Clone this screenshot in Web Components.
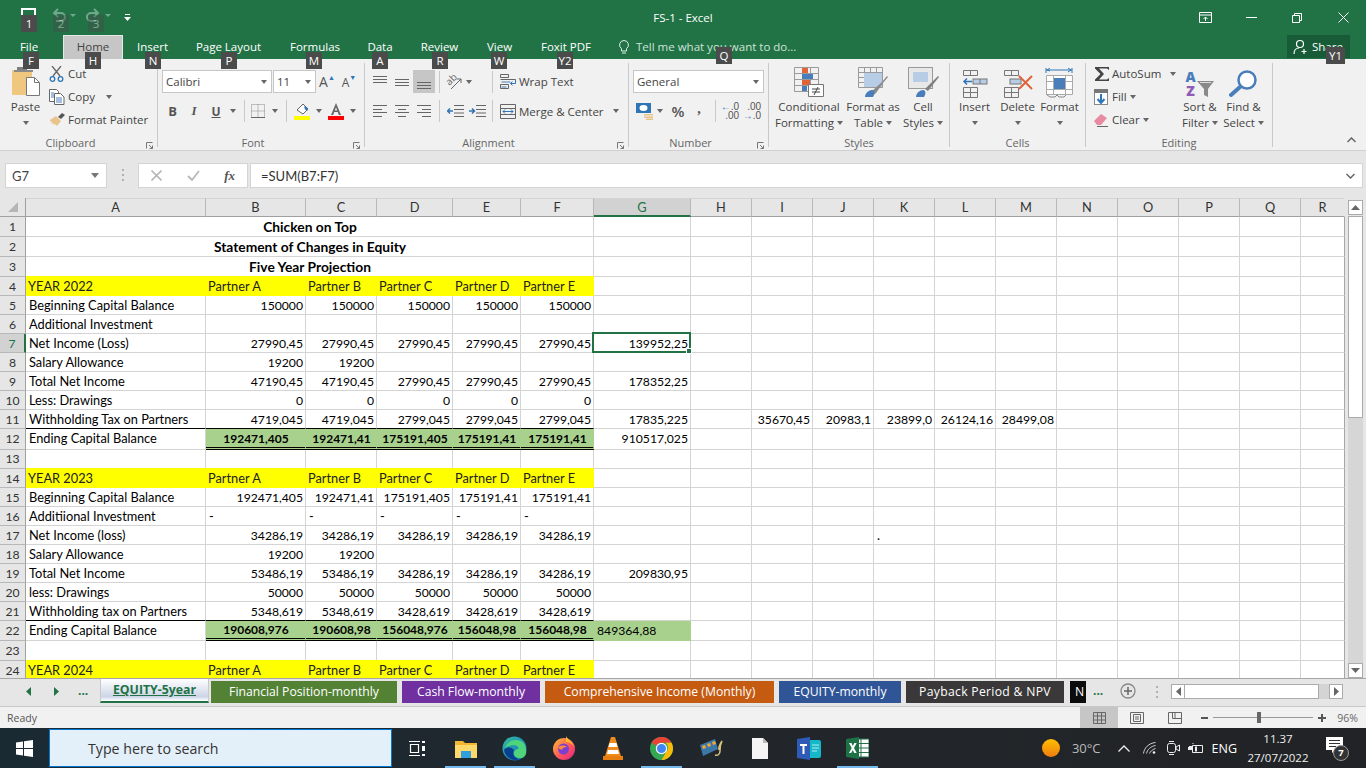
<!DOCTYPE html>
<html>
<head>
<meta charset="utf-8">
<title>FS-1 - Excel</title>
<style>
  html, body { margin: 0; padding: 0; width: 1366px; height: 768px; overflow: hidden; background: #f1f1f1; }
  body { font-family: "Open Sans", "Noto Sans", sans-serif; position: relative; }
</style>
</head>
<body>
<xl-titlebar></xl-titlebar>
<xl-ribbon></xl-ribbon>
<xl-formula></xl-formula>
<xl-sheet></xl-sheet>
<xl-tabs></xl-tabs>
<xl-status></xl-status>
<xl-taskbar></xl-taskbar>
<xl-keytips></xl-keytips>

<script>
const svg = (w, h, body) => `<svg xmlns="http://www.w3.org/2000/svg" width="${w}" height="${h}" viewBox="0 0 ${w} ${h}" style="display:block;flex:none">${body}</svg>`;
const caret = '<i class="c"></i>';

class Base extends HTMLElement {
    constructor() {
        super();
        this.attachShadow({ mode: 'open' });
    }

    connectedCallback() {
        this.shadowRoot.innerHTML = this.markup();
    }
}

class XlTitlebar extends Base {
    markup() {
        const tabs = [['File', 4, 50], ['Home', 9, 60, 1], ['Insert', 4.5, 50], ['Page Layout', 11, 80], ['Formulas', 16.5, 60], ['Data', 15, 40], ['Review', 14.5, 50], ['View', 15, 40], ['Foxit PDF', 11.5, 70]];
        return `<style>
          :host { display:block; height:59px; background:#217346; color:#fff; font:12px "Open Sans",sans-serif; }
          .top { height:35px; display:flex; align-items:center; position:relative; }
          .qat { display:flex; align-items:flex-start; padding:8px 0 0 21px; height:35px; box-sizing:border-box; }
          .qg { display:flex; gap:4px; align-items:center; height:14px; }
          .title { position:absolute; left:0; right:0; top:10px; text-align:center; font-size:11.500px; line-height:16px; }
          .win { margin-left:auto; display:flex; align-items:center; }
          .win span { width:46px; display:flex; justify-content:center; }
          .tabs { height:24px; display:flex; align-items:stretch; }
          .tab { text-align:center; line-height:23px; box-sizing:border-box; font-size:11.500px; }
          .tab.on { background:#c6c6c6; color:#444; border:1px solid #e8e8e8; border-bottom:none; line-height:22px; }
          .tell { margin-left:18px; display:flex; align-items:center; gap:7px; color:#cfe3d8; font-size:11.500px; padding-bottom:1px; }
          .share { margin-left:auto; margin-right:16px; width:63px; height:23px; background:#185c37; display:flex; align-items:center; gap:3px; padding-left:6px; box-sizing:border-box; font-size:11.500px; overflow:hidden; }
        </style>
        <div class="top">
          <div class="qat">
            ${svg(15, 12, '<path d="M1 12V1h13v11" fill="none" stroke="#fff" stroke-width="2"/>')}
            <span class="qg" style="margin-left:15px">
              ${svg(15, 14, '<path d="M3 5h7a4 4 0 0 1 0 8H5" fill="none" stroke="#6fa88a" stroke-width="2"/><path d="M7 1 3 5l4 4" fill="none" stroke="#6fa88a" stroke-width="2"/>')}
              ${svg(6, 3, '<path d="M0 0h6L3 3z" fill="#6fa88a"/>')}
            </span>
            <span class="qg" style="margin-left:10px">
              ${svg(15, 14, '<path d="M12 5H5a4 4 0 0 0 0 8h5" fill="none" stroke="#6fa88a" stroke-width="2"/><path d="m8 1 4 4-4 4" fill="none" stroke="#6fa88a" stroke-width="2"/>')}
              ${svg(6, 3, '<path d="M0 0h6L3 3z" fill="#6fa88a"/>')}
            </span>
            <span style="margin-left:13px;margin-top:6px">${svg(7, 7, '<path d="M1 0h5v1H1zM0 3h7L3.500 7z" fill="#fff"/>')}</span>
          </div>
          <div class="title">FS-1 - Excel</div>
          <div class="win">
            <span>${svg(13, 11, '<path d="M.5.500h12v10H.5zM.5 3h12M6.500 9V5M4.500 7l2-2 2 2" fill="none" stroke="#fff"/>')}</span>
            <span>${svg(11, 1, '<path d="M0 .5h11" stroke="#fff"/>')}</span>
            <span>${svg(10, 10, '<path d="M.5 2.500h7v7h-7zM2.500 2.500v-2h7v7h-2" fill="none" stroke="#fff"/>')}</span>
            <span>${svg(11, 11, '<path d="m.5.500 10 10M10.500.500l-10 10" stroke="#fff"/>')}</span>
          </div>
        </div>
        <div class="tabs">
          ${tabs.map(([t, ml, w, on]) => `<div class="tab${on ? ' on' : ''}" style="margin-left:${ml}px;width:${w}px">${t}</div>`).join('')}
          <div class="tell">${svg(10, 14, '<path d="M5 .5a4.500 4.500 0 0 0-2.500 8.200V11h5V8.700A4.500 4.500 0 0 0 5 .5zM3 13h4" fill="none" stroke="#dfeee6"/>')}<span>Tell me what you want to do...</span></div>
          <div class="share">${svg(16, 16, '<circle cx="7" cy="5" r="3.500" fill="none" stroke="#fff" stroke-width="1.200"/><path d="M1 15c0-4 2.500-6 5-6M11 10v5M8.500 12.500h5" fill="none" stroke="#fff" stroke-width="1.200"/>')}<span>Share</span></div>
        </div>`;
    }
}

class XlGroup extends Base {
    markup() {
        const has = this.hasAttribute('launcher');
        const launcher = has ? `<i class="l">${svg(7, 7, '<path d="M.5 6.500v-6h6M3 3l3.500 3.500M6.500 3.500v3h-3" fill="none" stroke="#777"/>')}</i>` : '';
        return `<style>
          :host { display:flex; flex-direction:column; flex:none; position:relative; box-sizing:border-box; height:84px; border-right:1px solid #c8c8c8; margin-top:4px; }
          .body { height:72px; display:block; }
          .label { position:absolute; left:0; right:${has ? 16 : 0}px; top:72px; height:16px; line-height:16px; text-align:center; color:#666; font-size:11px; }
          .l { position:absolute; right:4px; top:79px; display:block; }
        </style>
        <div class="body"><slot></slot></div>
        <div class="label">${this.getAttribute('label')}</div>${launcher}`;
    }
}

const ic = {
    paste: svg(30, 30, '<rect x="1" y="3" width="20" height="25" rx="1" fill="#f0c77f"/><rect x="6" y="0" width="10" height="4" fill="#7f7f7f"/><rect x="3" y="3" width="19" height="2" fill="#8a8a8a"/><path d="M15.500 10.500h8l5 5v13h-13z" fill="#fff" stroke="#777"/><path d="M23.500 10.500v5h5" fill="none" stroke="#777"/>'),
    cut: svg(15, 16, '<path d="m3 0 8 10M12 0 4 10" stroke="#666" stroke-width="1.300" fill="none"/><circle cx="3.500" cy="13" r="2.300" fill="none" stroke="#2f75b5" stroke-width="1.300"/><circle cx="11.500" cy="13" r="2.300" fill="none" stroke="#2f75b5" stroke-width="1.300"/>'),
    copy: svg(16, 16, '<path d="M.5.500h7l2 2v10h-9z" fill="#fff" stroke="#666"/><path d="M5.500 4.500h6l3.500 3.500v7.500H5.500z" fill="#fff" stroke="#666"/><path d="M7 9h6M7 11h6M7 13h6M2 4h3M2 6h3M2 8h3" stroke="#4a7ebb"/>'),
    painter: svg(17, 15, '<path d="m9 5 4-4 3 2-4 4z" fill="#555"/><path d="M1 8 7 4l5 5-4 5-2-2-1 1-1-2-2 1 1-2-2-1z" fill="#e9c48a"/>'),
    bold: '<b style="font:bold 13px \'Open Sans\';color:#555">B</b>',
    ital: '<i style="font:italic 13px \'Liberation Serif\';font-weight:bold;color:#555">I</i>',
    under: '<span style="font:bold 12px \'Open Sans\';color:#555;text-decoration:underline">U</span>',
    border: svg(14, 14, '<path d="M.5.500h13v13H.5zM7 .5v13M.5 7h13" fill="none" stroke="#888" stroke-dasharray="1 1"/><path d="M0 13.500h14" stroke="#666"/>'),
    fill: svg(17, 17, '<path d="m3 7 6-6 5 5-5 5z" fill="#fff" stroke="#666"/><path d="M10 3.500c3 0 4 2 4 4l-3-1z" fill="#2f75b5"/><rect x="0" y="13" width="16" height="4" fill="#ffff00"/>'),
    color: svg(16, 17, '<path d="M3 12 8 0l5 12h-2.200l-1-3H6.200l-1 3zM6.800 7.500h2.400L8 4.200z" fill="#666"/><rect x="0" y="13" width="16" height="4" fill="#ff0000"/>'),
    lines: (...ls) => svg(15, 14, ls.map(l => `<path d="M${l[0]} ${l[2]}.5h${l[1] - l[0]}" stroke="#666"/>`).join('')),
    orient: '<span style="display:flex;align-items:center;position:relative;width:17px;height:17px"><span style="position:absolute;left:0;top:-1px;font:10px/14px \'Open Sans\';color:#666;transform:rotate(-45deg)">ab</span><span style="position:absolute;left:3px;top:3px">' + svg(14, 14, '<path d="m3 13 10-10M13 3H9M13 3v4" stroke="#666" fill="none"/>') + '</span></span>',
    outdent: svg(17, 12, '<path d="M7 .5h10M7 4.500h10M7 8h10M7 11.500h10" stroke="#666"/><path d="M6 6H1m2-2.500L.5 6 3 8.500" stroke="#2f75b5" stroke-width="1.500" fill="none"/>'),
    indent: svg(17, 12, '<path d="M7 .5h10M7 4.500h10M7 8h10M7 11.500h10" stroke="#666"/><path d="M0 6h5M3 3.500 5.500 6 3 8.500" stroke="#2f75b5" stroke-width="1.500" fill="none"/>'),
    wrap: svg(17, 15, '<path d="M.5.500h8v3h-8zM.5 5.500h15M.5 10.500h8v4h-8z" fill="none" stroke="#666"/><path d="M1.500 8h9M1.500 13h5" stroke="#4a7ebb"/><path d="M15.500 5.500v4h-5m2-2-2 2 2 2" fill="none" stroke="#2f75b5"/>'),
    merge: svg(16, 15, '<path d="M.5.500h15v14H.5zM.5 4.500h15M.5 10.500h15" fill="none" stroke="#666"/><path d="M3 7.500h10M5 5.500l-2 2 2 2M11 5.500l2 2-2 2" fill="none" stroke="#2f75b5"/>'),
    money: svg(17, 17, '<rect x="0" y="0" width="15" height="10" fill="#2f75b5"/><ellipse cx="7.500" cy="5" rx="4" ry="3" fill="#fff"/><path d="M8 11h9v1.500H8zM8 13.500h9V15H8zM10 15.500h7V17h-7z" fill="#e9c48a"/>'),
    pct: '<span style="font:600 15px \'Open Sans\';color:#555">%</span>',
    comma: '<span style="font:bold 14px \'Liberation Serif\';color:#555;position:relative;top:-2px">,</span>',
    dec1: '<span class="dc"><b><u>←</u>.0</b><b>.00</b></span>',
    dec2: '<span class="dc"><b>.00</b><b><u>→</u>.0</b></span>',
    cond: svg(31, 31, '<path d="M.5.500h24v24H.5zM8.500.500v24M16.500.500v24M.5 6.500h24M.5 12.500h24M.5 18.500h24" fill="none" stroke="#9a9a9a"/><path d="M8 1h6v5H8zM8 13h8v5H8z" fill="#e0633a"/><path d="M8 7h11v5H8zM8 19h5v5H8z" fill="#4a7ebb"/><path d="M14.500 17.500h15v12h-15z" fill="#fff" stroke="#777"/><path d="M18 22h8M18 25h8M24 20l-4 8" stroke="#444" fill="none"/>'),
    table: svg(31, 31, '<path d="M.5.500h24v20H.5zM6.500.500v20M12.500.500v20M18.500.500v20M.5 5.500h24M.5 10.500h24M.5 15.500h24" fill="none" stroke="#9a9a9a"/><rect x="6" y="6" width="18" height="14" fill="#b7cde6"/><path d="m14 24 10-9 5-6 1 1-5 6-7 10-5 4H7z" fill="#8a8a8a"/><path d="M7 30c0-4 4-7 7-7s3 4 1 7z" fill="#4a7ebb"/>'),
    cell: svg(31, 31, '<rect x=".5" y=".5" width="24" height="21" fill="#e8e8e8" stroke="#9a9a9a"/><rect x="5" y="5" width="15" height="10" fill="#b7cde6"/><path d="m17 22 8-8 5-5 1 1-4 5-7 9z" fill="#7f7f7f"/><path d="M8 30c0-4 4-7 7-7s3 4 1 7z" fill="#4a7ebb"/>'),
    insert: svg(26, 28, '<path d="M1.500.500h14v5h-14zM8.500.500v5M1.500 17.500h14v10h-14zM8.500 17.500v10M1.500 22.500h14" fill="none" stroke="#777"/><rect x="11" y="9" width="14" height="5" fill="#b7cde6" stroke="#777"/><path d="M18 9v5" stroke="#777"/><path d="M10 11.500H2m3-3-3 3 3 3" fill="none" stroke="#2f75b5" stroke-width="1.500"/>'),
    del: svg(30, 28, '<path d="M1.500.500h14v5h-14zM8.500.500v5M1.500 17.500h14v10h-14zM8.500 17.500v10M1.500 22.500h14" fill="none" stroke="#777"/><rect x="7" y="9" width="11" height="5" fill="#b7cde6" stroke="#777"/><path d="m16 6 13 13M29 6 16 19" stroke="#e0633a" stroke-width="2"/>'),
    format: svg(29, 30, '<path d="M1 2h26M1 0v5M27 0v5" stroke="#2f75b5" fill="none"/><path d="M5 3 2 2l3-2M23 0l3 2-3 2" fill="none" stroke="#2f75b5"/><path d="M1.500 7.500h26v19h-26zM8.500 7.500v19M20.500 7.500v19M1.500 13.500h26M1.500 21.500h26" fill="#fff" stroke="#aaa"/><rect x="9" y="10" width="11" height="11" fill="#4a7ebb"/><path d="M1.500 26.500 5 29h5l2-2 2 2h5l2-2" fill="none" stroke="#888"/>'),
    sigma: svg(16, 16, '<path d="M1 1h14v3l-2-1.500H5L10 8l-5 5.500h8l2-1.500v3H1v-1.500L6.500 8 1 2.500z" fill="#444"/>'),
    fillBtn: svg(14, 16, '<rect x=".5" y=".5" width="13" height="15" fill="#fff" stroke="#888"/><rect x="0" y="0" width="14" height="4" fill="#777"/><path d="M7 5v9M3.500 10 7 14l3.500-4" fill="none" stroke="#2f75b5" stroke-width="2"/>'),
    clear: svg(15, 15, '<path d="m0 9 7-7 6 4-6 7H3z" fill="#e88ba0"/><path d="M3 14.500h11" stroke="#666"/>'),
    sort: '<span class="az"><b style="color:#4a7ebb">A</b><b style="color:#8e5cb5">Z</b></span>' + svg(18, 18, '<path d="M0 1h17l-6 8v8l-4-2V9z" fill="#8a8a8a"/><path d="M3 2.500h11" stroke="#ddd"/>'),
    find: svg(29, 29, '<circle cx="18" cy="11" r="8.500" fill="#fff" stroke="#4a7ebb" stroke-width="2.500"/><path d="m11 18-9 8" stroke="#4a7ebb" stroke-width="4" stroke-linecap="round"/>')
};

class XlRibbon extends Base {
    markup() {
        const t = (w, html) => `<span class="t" style="width:${w}px">${html}</span>`;
        const gap = w => `<span style="width:${w}px;flex:none"></span>`;
        const big = (w, icon, a, b) => `<div class="big" style="width:${w}px"><div class="bi">${icon}</div><div>${a}</div><div>${b}</div></div>`;
        const sep = '<span class="sep"></span>';
        const menu = (icon, text, extra = '') => `<div class="m"><span class="mi">${icon}</span><span class="mt">${text}</span>${extra}</div>`;
        return `<style>
          :host { display:flex; height:92px; background:#f1f1f1; box-sizing:border-box; border-bottom:1px solid #d0d0d0; color:#444; font:11.500px/16px "Open Sans",sans-serif; position:relative; }
          .c { display:inline-block; width:0; height:0; border-left:3.500px solid transparent; border-right:3.500px solid transparent; border-top:4px solid #666; flex:none; }
          .t { display:inline-flex; align-items:center; justify-content:center; height:23px; flex:none; }
          .row { display:flex; align-items:center; height:24px; }
          .sep { width:1px; height:22px; background:#c8c8c8; flex:none; }
          .box { display:flex; align-items:center; justify-content:space-between; box-sizing:border-box; height:23px; background:#fff; border:1px solid #c6c6c6; padding:0 4px 0 3px; color:#444; flex:none; }
          .big { display:flex; flex-direction:column; align-items:center; text-align:center; flex:none; white-space:nowrap; }
          .big > div { height:16px; display:flex; align-items:center; justify-content:center; gap:3px; }
          .big .bi { height:33px; align-items:flex-end; padding-bottom:1px; box-sizing:border-box; gap:0; }
          .m { display:flex; align-items:center; height:23px; white-space:nowrap; }
          .mi { display:flex; width:var(--mi,19px); flex:none; }
          .mt { display:inline-flex; align-items:center; gap:3px; }
          .dc { display:flex; flex-direction:column; align-items:flex-end; font:10px/9px "Liberation Sans",sans-serif; color:#555; white-space:nowrap; }
          .dc b { font-weight:normal; }
          .dc u { text-decoration:none; color:#2f75b5; }
          .az { display:flex; flex-direction:column; font:bold 14px/14px "Open Sans",sans-serif; margin-right:1px; }
          .pad { display:flex; }
          .stack { padding-top:7px; box-sizing:border-box; }
          .stack .row:first-child { margin-bottom:6px; height:23px; }
          .chev { position:absolute; right:10px; top:78px; }
          .col { padding-top:3px; }
        </style>
        <xl-group label="Clipboard" launcher style="width:158px">
          <div class="pad">
            <div class="big" style="width:49px;margin-left:1px"><div class="bi" style="height:36px;padding-bottom:2px">${ic.paste}</div><div>Paste</div><div>${caret}</div></div>
            <div style="margin:-1px 0 0 -1px">
              ${menu(ic.cut, 'Cut')}
              ${menu(ic.copy, 'Copy', '<span style="width:11px"></span>' + caret)}
              ${menu(ic.painter, 'Format Painter')}
            </div>
          </div>
        </xl-group>
        <xl-group label="Font" launcher style="width:207px">
          <div class="stack" style="padding-left:4px">
            <div class="row">
              <span class="box" style="width:110px"><span>Calibri</span>${caret}</span>
              <span class="box" style="width:43px;margin-left:1px"><span>11</span>${caret}</span>
              ${t(22, '<span style="font:14px \'Open Sans\';color:#555">A<sup style="font-size:7px;color:#2f75b5;vertical-align:7px">▲</sup></span>')}
              ${t(22, '<span style="font:12px \'Open Sans\';color:#555">A<sup style="font-size:7px;color:#2f75b5;vertical-align:7px">▼</sup></span>')}
            </div>
            <div class="row">
              ${t(21, ic.bold)}${t(22, ic.ital)}${t(22, ic.under)}${t(12, caret)}${gap(5)}${sep}
              ${t(26, ic.border)}${t(8, caret)}${gap(7)}${sep}
              ${t(30, ic.fill)}${t(3, caret)}${t(32, ic.color)}${t(2, caret)}
            </div>
          </div>
        </xl-group>
        <xl-group label="Alignment" launcher style="width:264px">
          <div class="stack" style="padding-left:4px">
            <div class="row">
              ${t(22, ic.lines([0, 14, 1], [0, 14, 4], [0, 14, 7]))}
              ${t(22, ic.lines([0, 14, 4], [0, 14, 7], [0, 14, 10]))}
              <span class="t" style="width:22px;background:#c6c6c6">${ic.lines([0, 14, 7], [0, 14, 10], [0, 14, 13])}</span>
              ${gap(4)}${sep}
              ${t(26, ic.orient)}${t(6, caret)}${gap(20)}<span class="sep" style="margin-right:7px"></span>
              ${ic.wrap}<span style="margin-left:2px">Wrap Text</span>
            </div>
            <div class="row">
              ${t(22, ic.lines([0, 14, 1], [0, 9, 5], [0, 14, 8], [0, 9, 12]))}
              ${t(22, ic.lines([0, 14, 1], [3, 11, 5], [0, 14, 8], [3, 11, 12]))}
              ${t(22, ic.lines([0, 14, 1], [5, 14, 5], [0, 14, 8], [5, 14, 12]))}
              ${gap(4)}${sep}
              ${t(30, ic.outdent)}${t(15, ic.indent)}${gap(7)}<span class="sep" style="margin-right:7px"></span>
              ${ic.merge}<span style="margin-left:3px;padding-top:2px">Merge &amp; Center</span>${gap(9)}${caret}
            </div>
          </div>
        </xl-group>
        <xl-group label="Number" launcher style="width:140px">
          <div class="stack" style="padding-left:4px">
            <div class="row"><span class="box" style="width:131px"><span>General</span>${caret}</span></div>
            <div class="row">
              ${t(22, ic.money)}${t(10, caret)}${t(26, ic.pct)}${t(16, ic.comma)}${gap(8)}${sep}
              ${t(28, ic.dec1)}${t(16, ic.dec2)}
            </div>
          </div>
        </xl-group>
        <xl-group label="Styles" style="width:181px">
          <div class="pad col" style="padding-left:6px">
            ${big(68, ic.cond, 'Conditional', 'Formatting ' + caret)}
            ${big(60, ic.table, 'Format as', 'Table ' + caret)}
            ${big(40, ic.cell, 'Cell', 'Styles ' + caret)}
          </div>
        </xl-group>
        <xl-group label="Cells" style="width:136px">
          <div class="pad col" style="padding-left:3px">
            ${big(43, ic.insert, 'Insert', caret)}
            ${big(43, ic.del, 'Delete', caret)}
            ${big(41, ic.format, 'Format', caret)}
          </div>
        </xl-group>
        <xl-group label="Editing" style="width:187px">
          <div class="pad">
            <div style="margin-top:-1px;padding-left:8px;width:92px;box-sizing:border-box;--mi:18px">
              ${menu(ic.sigma, 'AutoSum', '<span style="width:9px"></span>' + caret)}
              ${menu(ic.fillBtn, 'Fill ' + caret)}
              ${menu(ic.clear, 'Clear ' + caret)}
            </div>
            <div class="pad col">
              ${big(44, ic.sort, 'Sort &amp;', 'Filter ' + caret)}
              ${big(43, ic.find, 'Find &amp;', 'Select ' + caret)}
            </div>
          </div>
        </xl-group>
        <span class="chev">${svg(9, 6, '<path d="m.5 5 4-4 4 4" fill="none" stroke="#666" stroke-width="1.500"/>')}</span>`;
    }
}

class XlFormula extends Base {
    markup() {
        return `<style>
          :host { display:flex; align-items:flex-start; height:47px; padding-top:12px; box-sizing:border-box; background:#e6e6e6; color:#444; }
          .b { height:25px; box-sizing:border-box; background:#fff; border:1px solid #d4d4d4; display:flex; align-items:center; flex:none; }
          .name { width:102px; margin-left:5px; padding:0 7px 0 6px; justify-content:space-between; font:13px Lato,sans-serif; }
          .c { width:0; height:0; border-left:4px solid transparent; border-right:4px solid transparent; border-top:5px solid #777; }
          .dots { width:31px; display:flex; justify-content:center; flex:none; padding-top:5px; }
          .btns { width:110px; justify-content:space-between; padding:0 12px; }
          .fx { font:italic bold 13px "Liberation Serif",serif; color:#555; }
          .input { margin-left:2px; width:1113px; padding-left:10px; justify-content:space-between; padding-right:7px; font:13px Lato,sans-serif; color:#333; }
        </style>
        <div class="b name"><span>G7</span><i class="c"></i></div>
        <div class="dots">${svg(3, 13, '<path d="M1 1h2v2H1zM1 6h2v2H1zM1 11h2v2H1z" fill="#b0b0b0"/>')}</div>
        <div class="b btns">
          ${svg(11, 11, '<path d="m.5.500 10 10M10.500.500l-10 10" stroke="#b8b8b8" stroke-width="1.600"/>')}
          ${svg(13, 11, '<path d="m1 6 4 4 7-9" fill="none" stroke="#b8b8b8" stroke-width="1.800"/>')}
          <span class="fx">fx</span>
        </div>
        <div class="b input"><span>=SUM(B7:F7)</span>${svg(9, 6, '<path d="m.5 1 4 4 4-4" fill="none" stroke="#666" stroke-width="1.500"/>')}</div>`;
    }
}

const P = ['Partner A', 'Partner B', 'Partner C', 'Partner D', 'Partner E'];
const SHEET_ROWS = {
    5: ['Beginning Capital Balance', '150000', '150000', '150000', '150000', '150000'],
    6: ['Additional Investment'],
    7: ['Net Income (Loss)', '27990,45', '27990,45', '27990,45', '27990,45', '27990,45', '139952,25'],
    8: ['Salary Allowance', '19200', '19200'],
    9: ['Total Net Income', '47190,45', '47190,45', '27990,45', '27990,45', '27990,45', '178352,25'],
    10: ['Less: Drawings', '0', '0', '0', '0', '0'],
    11: ['Withholding Tax on Partners', '4719,045', '4719,045', '2799,045', '2799,045', '2799,045', '17835,225', '', '35670,45', '20983,1', '23899,0', '26124,16', '28499,08'],
    12: ['Ending Capital Balance', '192471,405', '192471,41', '175191,405', '175191,41', '175191,41', '910517,025'],
    15: ['Beginning Capital Balance', '192471,405', '192471,41', '175191,405', '175191,41', '175191,41'],
    16: ['Additiional Investment', '-', '-', '-', '-', '-'],
    17: ['Net Income (loss)', '34286,19', '34286,19', '34286,19', '34286,19', '34286,19', '', '', '', '', '.'],
    18: ['Salary Allowance', '19200', '19200'],
    19: ['Total Net Income', '53486,19', '53486,19', '34286,19', '34286,19', '34286,19', '209830,95'],
    20: ['less: Drawings', '50000', '50000', '50000', '50000', '50000'],
    21: ['Withholding tax on Partners', '5348,619', '5348,619', '3428,619', '3428,619', '3428,619'],
    22: ['Ending Capital Balance', '190608,976', '190608,98', '156048,976', '156048,98', '156048,98', '849364,88']
};

class XlSheet extends Base {
    markup() {
        const widths = [180, 100, 71, 76, 68, 73, 97, 61, 61, 61, 61, 61, 61, 61, 61, 61, 61, 44];
        const letters = 'ABCDEFGHIJKLMNOPQR'.split('');
        const heights = [20, 20, 20, 19, 19, 19, 19, 19, 19, 19, 19, 21, 19, 19, 19, 19, 19, 19, 19, 19, 19, 20, 20, 20];
        let cells = '<div class="corner">' + svg(14, 14, '<path d="M12 2v10H2z" fill="#b5b5b5"/>') + '</div>';
        letters.forEach(l => { cells += `<div class="ch${l === 'G' ? ' sel' : ''}">${l}</div>`; });
        for (let r = 1; r <= 24; r++) {
            const up = r === 12 || r === 13 ? ' up' : '';
            cells += `<div class="rh${r === 7 ? ' sel' : ''}${up}">${r}</div>`;
            if (r <= 3) {
                cells += `<div class="td head" style="grid-column:span 6">${['Chicken on Top', 'Statement of Changes in Equity', 'Five Year Projection'][r - 1]}</div>`;
                for (let c = 6; c < 18; c++) cells += `<div class="td${c === 17 ? ' last' : ''}"></div>`;
                continue;
            }
            const yellow = r === 4 || r === 14 || r === 24;
            const data = yellow ? ['YEAR ' + { 4: 2022, 14: 2023, 24: 2024 }[r], ...P] : (SHEET_ROWS[r] || []);
            for (let c = 0; c < 18; c++) {
                const v = data[c] || '';
                const cls = ['td'];
                if (c === 17) cls.push('last');
                if (up && !(c >= 1 && c <= 5)) cls.push('up');
                if (yellow && c < 6) cls.push('y');
                const total = r === 12 || r === 22;
                if (total && c >= 1 && c <= 5) cls.push('g');
                if (r === 22 && c === 6) cls.push('g6');
                if ((r === 11 || r === 21) && c <= 5) cls.push('line');
                const numeric = /^[\d,]+$/.test(v);
                if (numeric && !(r === 22 && c === 6)) cls.push('num');
                if (r === 22 && c === 6) cls.push('digits');
                const sel = r === 7 && c === 6 ? '<i class="cursor"><b></b></i>' : '';
                cells += `<div class="${cls.join(' ')}"><span>${v}</span>${sel}</div>`;
            }
        }
        return `<style>
          :host { display:block; height:480px; overflow:hidden; background:#e6e6e6; position:relative; }
          .wrap { display:flex; height:480px; }
          .grid { display:grid; width:1345px; background:#fff; grid-template-columns:26px ${widths.map(w => w + 'px').join(' ')}; grid-template-rows:19px ${heights.map(h => h + 'px').join(' ')}; font:12.800px/17px Lato,sans-serif; color:#000; flex:none; }
          .corner, .ch, .rh { background:#e6e6e6; color:#333; display:flex; align-items:center; justify-content:center; box-sizing:border-box; }
          .corner { border-right:1px solid #a0a0a0; border-bottom:1px solid #a0a0a0; }
          .ch { border-right:1px solid #b8b8b8; border-bottom:1px solid #a0a0a0; border-top:1px solid #d4d4d4; }
          .ch:nth-child(19) { border-right-color:#e6e6e6; }
          .rh { border-right:1px solid #a0a0a0; border-bottom:1px solid #b8b8b8; font-size:12.200px; }
          .ch.sel { background:#d2d2d2; color:#217346; border-bottom:2px solid #217346; }
          .rh.sel { background:#d2d2d2; color:#217346; border-right:2px solid #217346; }
          .td { box-sizing:border-box; border-right:1px solid #d4d4d4; border-bottom:1px solid #d4d4d4; padding:0 2px 0 3px; display:flex; align-items:center; white-space:nowrap; position:relative; min-width:0; }
          .td.last { border-right-color:#a6a6a6; }
          .up { padding-bottom:2px; }
          .num, .digits { font-size:12.200px; }
          .num { justify-content:flex-end; }
          .head { justify-content:center; font-weight:bold; font-size:13.800px; }
          .y { background:#ffff00; border-color:#ffff00; margin-top:-1px; color:#222; padding-top:1px; padding-left:2px; }
          .g { background:#a9d18e; border-right-color:#a9d18e; border-bottom:3px double #000; justify-content:center; font-weight:bold; font-size:12px; }
          .g6 { background:#a9d18e; border-color:#a9d18e; }
          .line { border-bottom-color:#000; }
          .cursor { position:absolute; left:-2px; top:-2px; right:-1px; bottom:-1px; border:2px solid #217346; z-index:2; }
          .cursor b { position:absolute; right:-3px; bottom:-3px; width:4px; height:4px; background:#217346; border:1px solid #fff; }
          .vs { width:21px; flex:none; background:#e6e6e6; display:flex; flex-direction:column; box-sizing:border-box; padding:2px 3px 0; }
          .btn { height:15px; background:#fff; border:1px solid #ababab; box-sizing:border-box; display:flex; align-items:center; justify-content:center; flex:none; }
          .thumb { height:202px; margin-top:1px; background:#fff; border:1px solid #ababab; box-sizing:border-box; flex:none; }
          .sp { flex:1; background:#d6d6d6; }
        </style>
        <div class="wrap">
          <div class="grid">${cells}</div>
          <div class="vs">
            <div class="btn">${svg(9, 5, '<path d="M4.500 0 9 5H0z" fill="#666"/>')}</div>
            <div class="thumb"></div>
            <div class="sp"></div>
            <div class="btn">${svg(9, 5, '<path d="M0 0h9L4.500 5z" fill="#666"/>')}</div>
          </div>
        </div>`;
    }
}

class XlTabs extends Base {
    markup() {
        const tabs = [['Financial Position-monthly', 186, '#548235'], ['Cash Flow-monthly', 138, '#7030a0'], ['Comprehensive Income (Monthly)', 229, '#c55a11'], ['EQUITY-monthly', 122, '#2f5597'], ['Payback Period &amp; NPV', 158, '#3a3838'], ['N', 16, '#0c0c0c']];
        return `<style>
          :host { display:flex; align-items:flex-start; height:29px; background:#e6e6e6; border-top:1px solid #a6a6a6; border-bottom:1px solid #c8c8c8; box-sizing:border-box; font:12.200px "Open Sans",sans-serif; position:relative; }
          .nav { width:100px; height:24px; display:flex; align-items:center; flex:none; color:#217346; }
          .act { width:109px; height:24px; flex:none; box-sizing:border-box; background:linear-gradient(#fff,#cdd5e6 80%,#fff); border:1px solid #c8c8c8; border-top:none; border-bottom:2px solid #217346; text-align:center; color:#217346; font-weight:700; line-height:21px; text-decoration:underline; font-size:12.300px; }
          .tab { flex:none; margin:2px 0 0 5px; height:22px; color:#fff; text-align:center; line-height:21px; position:relative; overflow:hidden; box-sizing:border-box; }
          .right { display:flex; align-items:center; flex:1; height:24px; color:#217346; }
          .hs { display:flex; align-items:center; height:17px; margin-left:0; }
          .hb { width:14px; height:15px; background:#fff; border:1px solid #ababab; display:flex; align-items:center; justify-content:center; flex:none; box-sizing:border-box; }
        </style>
        <div class="nav">
          <span style="margin-left:26px">${svg(5, 9, '<path d="M5 0v9L0 4.500z" fill="#217346"/>')}</span>
          <span style="margin-left:23px">${svg(5, 9, '<path d="M0 0v9l5-4.500z" fill="#217346"/>')}</span>
          <b style="margin-left:19px;font-size:12px;line-height:10px">...</b>
        </div>
        <div class="act">EQUITY-5year</div>
        ${tabs.map(([t, w, c], i) => `<div class="tab" style="width:${w}px;background:${c};${i === 0 ? 'margin-left:2px;' : ''}${i === 4 ? 'letter-spacing:.3px;' : ''}${i === 5 ? 'text-align:left;padding-left:5px;margin-left:6px;' : ''}">${t}</div>`).join('')}
        <div class="right">
          <b style="margin-left:7px;font-size:12px;line-height:10px">...</b>
          <span style="margin-left:17px;display:flex">${svg(16, 16, '<circle cx="8" cy="8" r="7" fill="none" stroke="#888" stroke-width="1.300"/><path d="M8 4v8M4 8h8" stroke="#666" stroke-width="1.500"/>')}</span>
          <span style="margin-left:19px;display:flex">${svg(3, 13, '<path d="M1 1h2v2H1zM1 6h2v2H1zM1 11h2v2H1z" fill="#b0b0b0"/>')}</span>
          <div class="hs" style="margin-left:13px">
            <span class="hb">${svg(5, 9, '<path d="M5 0v9L0 4.500z" fill="#666"/>')}</span>
            <span style="width:134px;height:15px;box-sizing:border-box;background:#fff;border:1px solid #ababab;border-left:none;flex:none"></span>
            <span style="width:10px;height:15px;background:#d4d4d4;flex:none"></span>
            <span class="hb">${svg(5, 9, '<path d="M0 0v9l5-4.500z" fill="#666"/>')}</span>
          </div>
        </div>`;
    }
}

class XlStatus extends Base {
    markup() {
        return `<style>
          :host { display:flex; align-items:center; height:21px; background:#f1f1f1; font:10.500px "Open Sans",sans-serif; color:#555; }
          .ready { margin-left:7px; }
          .v { width:38px; height:21px; display:flex; align-items:center; justify-content:center; flex:none; }
          .views { margin-left:auto; display:flex; }
          .slider { display:flex; align-items:center; margin-left:7px; height:21px; position:relative; }
          .track { width:100px; height:1px; background:#999; margin:0 5px; position:relative; }
          .track i { position:absolute; left:44px; top:-5px; width:4px; height:11px; background:#666; }
          .pct { width:36px; margin-left:4px; text-align:right; padding-right:8px; box-sizing:border-box; font-size:10.500px; color:#666; }
        </style>
        <span class="ready">Ready</span>
        <div class="views">
          <span class="v" style="background:#c6c6c6">${svg(13, 12, '<path d="M.5.500h12v11H.5zM4.500.500v11M8.500.500v11M.5 4h12M.5 8h12" fill="none" stroke="#666"/>')}</span>
          <span class="v">${svg(14, 12, '<path d="M.5.500h13v11H.5z" fill="none" stroke="#666"/><path d="M3.500 2.500h7v7h-7zM5 5h4M5 7h4" fill="none" stroke="#666"/>')}</span>
          <span class="v">${svg(14, 12, '<path d="M.5.500h13v11H.5zM7 .5v6H4.500v-6M7 6.500h6.500" fill="none" stroke="#666"/>')}</span>
        </div>
        <div class="slider">
          ${svg(7, 2, '<path d="M0 1h7" stroke="#555" stroke-width="2"/>')}
          <div class="track"><i></i></div>
          ${svg(8, 8, '<path d="M4 0v8M0 4h8" stroke="#555" stroke-width="2"/>')}
        </div>
        <span class="pct">96%</span>`;
    }
}

class XlTaskbar extends Base {
    markup() {
        const app = (w, icon, on) => `<span class="app${on ? ' on' : ''}" style="width:${w}px">${icon}</span>`;
        const explorer = svg(22, 19, '<path d="M0 2h8l2 2h12v15H0z" fill="#f2b632"/><path d="M0 6h22v13H0z" fill="#ffd86b"/><path d="M6 12h10v7H6z" fill="#2f9fe0"/>');
        const edge = svg(25, 25, '<defs><linearGradient id="e1" x1="0" y1="0" x2="1" y2="1"><stop offset="0" stop-color="#35c1a0"/><stop offset="1" stop-color="#0b63c5"/></linearGradient></defs><circle cx="12.500" cy="12.500" r="12" fill="url(#e1)"/><path d="M24 13c0-6-5-9-10-9-6 0-10 4-11 9 3-4 9-5 12-3 2 1 2 3 0 3-2 1-4 3-3 6 1 2 4 4 8 3 3-1 5-4 4-9z" fill="#4fd47c"/><path d="M12 14c-2 3 0 9 6 9-8 3-15-2-16-9 2-3 6-4 10 0z" fill="#0a3f8f"/>');
        const firefox = svg(24, 24, '<defs><linearGradient id="f1" x1="0" y1="0" x2="1" y2="1"><stop offset="0" stop-color="#ffbd2e"/><stop offset=".6" stop-color="#ff4f5e"/><stop offset="1" stop-color="#d6248c"/></linearGradient></defs><circle cx="12" cy="13" r="11" fill="url(#f1)"/><path d="M14 0c1 3 7 6 9 12-3-5-6-6-9-6z" fill="#ffbd2e"/><circle cx="11.500" cy="13" r="5.500" fill="#7b3fd1"/><path d="M6 12c2-3 6-3 9-1-3 0-5 1-5 3z" fill="#ff8a3d"/>');
        const vlc = svg(20, 23, '<path d="M8 0h4l6 19H2z" fill="#f08a1d"/><path d="M6.500 6h7l1 4h-9zM5 13h10l1 4H4z" fill="#fff"/><path d="M0 19h20v4H0z" fill="#e77e10"/>');
        const chrome = svg(23, 23, '<circle cx="11.500" cy="11.500" r="11.500" fill="#34a853"/><path d="M11.500 0A11.500 11.500 0 0 1 21.500 5.800H11.500a5.700 5.700 0 0 0-5 3L1.600 5.800A11.500 11.500 0 0 1 11.500 0z" fill="#ea4335"/><path d="M21.500 5.800a11.500 11.500 0 0 1-10 17.200l5-8.500a5.700 5.700 0 0 0-1-8.700z" fill="#fbbc05"/><circle cx="11.500" cy="11.500" r="5.700" fill="#fff"/><circle cx="11.500" cy="11.500" r="4.500" fill="#4285f4"/>');
        const movie = svg(24, 20, '<path d="M1 7 16 1l3 10-15 7z" fill="#3b78a8"/><path d="m3 8 3-1 1 3-3 1zM8 6l3-1 1 3-3 1zM13 4l3-1 1 3-3 1z" fill="#f0a83c"/><path d="M16 17c3 1 5-1 5-4 0-4 1-8 2-10-2 3-4 6-3 9" fill="none" stroke="#d8c27a" stroke-width="1.500"/>');
        const doc = svg(16, 21, '<path d="M0 0h11l5 5v16H0z" fill="#f5f5f5"/><path d="M11 0v5h5z" fill="#bbb"/>');
        const teams = svg(24, 23, '<rect x="11" y="3" width="13" height="18" rx="2" fill="#14b8c8"/><path d="M0 2 13 0v23L0 21z" fill="#2f5bb7"/><path d="M3 7h7v2H7.500v8h-2V9H3z" fill="#fff"/><path d="M15 8h7M15 11h7M15 14h5" stroke="#b5ecf2"/>');
        const excel = svg(23, 22, '<rect x="8" y="2" width="15" height="18" fill="#fff"/><path d="M8 2h15v18H8zM15 2v18M8 6.500h15M8 11h15M8 15.500h15" fill="none" stroke="#1e7145"/><path d="M0 2 13 0v22L0 20z" fill="#1e7145"/><path d="m3 6 2.500 0 1.300 3 1.500-3 2.400 0-2.700 5 2.700 5H8.200L6.700 13l-1.500 3H3l2.700-5z" fill="#fff"/>');
        return `<style>
          :host { display:flex; align-items:center; height:40px; background:linear-gradient(90deg,#1a2a33,#22262a 60%,#212326); font:13px "Open Sans",sans-serif; color:#fff; position:relative; box-sizing:border-box; }
          .start { width:49px; display:flex; justify-content:center; flex:none; }
          .search { width:343px; height:38px; box-sizing:border-box; background:#e3eff9; border:1px solid #0078d4; padding-left:38px; display:flex; align-items:center; color:#333; font-size:14.200px; flex:none; }
          .app { height:40px; display:flex; align-items:center; justify-content:center; box-sizing:border-box; flex:none; position:relative; }
          .on::after { content:""; position:absolute; bottom:0; left:0; right:0; margin:0 4px; height:2px; background:#76b9ed; }
          .tray { margin-left:auto; display:flex; align-items:center; height:40px; }
          .clock { width:76px; text-align:center; font-size:11.500px; line-height:19px; color:#eee; }
        </style>
        <span class="start">${svg(17, 17, '<path d="M0 2.400 7 1.400V8H0zM8 1.300 17 0v8H8zM0 9h7v6.600L0 14.600zM8 9h9v8l-9-1.300z" fill="#fff"/>')}</span>
        <div class="search">Type here to search</div>
        <span class="app" style="width:49px">${svg(16, 15, '<path d="M0 .5h11M0 14.500h11M1.500 3.500h8v8h-8z" fill="none" stroke="#fff" stroke-width="1.200"/><path d="M13 0h3v2h-3zM13 5h3v5h-3zM13 13h3v2h-3z" fill="#fff"/>')}</span>
        ${app(49, explorer, 1)}${app(49, edge, 1)}${app(49, firefox)}${app(49, vlc)}${app(49, chrome, 1)}${app(49, movie)}${app(49, doc)}${app(49, teams)}${app(49, excel, 1)}
        <div class="tray">
          ${svg(18, 18, '<defs><linearGradient id="s1" x1="0" y1="0" x2="0" y2="1"><stop offset="0" stop-color="#ffc000"/><stop offset="1" stop-color="#ee7d10"/></linearGradient></defs><circle cx="9" cy="9" r="9" fill="url(#s1)"/>')}
          <span style="margin-left:12px;color:#bbb;font-size:13px">30°C</span>
          <span style="margin-left:17px">${svg(12, 7, '<path d="m.5 6.500 5.500-5.500 5.500 5.500" fill="none" stroke="#eee" stroke-width="1.300"/>')}</span>
          <span style="margin-left:13px">${svg(13, 12, '<path d="M.5 11.500C1 6 6 1 12.500.5M3.500 11.500C4 8 8 4 12.500 3.500M6.500 11.500C7 10 9 7.500 12.500 6.500" fill="none" stroke="#ccc"/><circle cx="11" cy="10.500" r="1.300" fill="#eee"/>')}</span>
          <span style="margin-left:11px">${svg(13, 16, '<rect x=".5" y="3.500" width="8" height="9" rx="2" fill="none" stroke="#eee"/><path d="m9 7 3.500-2v6L9 9zM2 1.500h5M2 14.500h5" fill="none" stroke="#eee"/>')}</span>
          <span style="margin-left:8px">${svg(15, 11, '<path d="M4.500 2.500h10v7h-10zM5 1V0M2 5V3M1 3.500h4" fill="none" stroke="#eee"/><path d="M0 4h4v3H0zM7 3.500h2v5H7z" fill="#eee"/>')}</span>
          <span style="margin-left:9px;font-size:12.500px">ENG</span>
          <div class="clock" style="margin-left:3px;width:76px"><div>11.37</div><div>27/07/2022</div></div>
          <span style="margin-left:10px;margin-right:20px;position:relative;display:block;width:20px;height:22px">
            ${svg(17, 16, '<path d="M0 0h17v13h-8l-3 3v-3H0z" fill="#fff"/><path d="M3 3.500h11M3 6.500h11M3 9.500h7" stroke="#333"/>')}
            <span style="position:absolute;left:7px;top:8px;width:14px;height:14px;border-radius:50%;background:#333;border:1px solid #999;font:bold 9.500px/14px 'Open Sans';text-align:center">7</span>
          </span>
        </div>`;
    }
}

class XlKeytips extends Base {
    markup() {
        const tips = [['1', 21, 15, 1], ['2', 53, 15, .4], ['3', 88, 15, .4], ['F', 23, 52], ['H', 85, 52], ['N', 145, 52], ['P', 221, 52], ['M', 306, 52], ['A', 372, 52], ['R', 432, 52], ['W', 491, 52], ['Y2', 557, 52], ['Q', 716, 47], ['Y1', 1326, 47]];
        return `<style>
          :host { position:absolute; left:0; top:0; display:block; }
          span { position:absolute; width:16px; height:17px; background:#4b4b4b; color:#fff; font:11.500px/17px "Open Sans",sans-serif; text-align:center; }
        </style>
        ${tips.map(([t, x, y, o]) => `<span style="left:${x}px;top:${y}px;${o && o < 1 ? 'opacity:' + o + ';' : ''}${t === 'Y1' ? 'width:19px;' : ''}">${t}</span>`).join('')}`;
    }
}

customElements.define('xl-titlebar', XlTitlebar);
customElements.define('xl-group', XlGroup);
customElements.define('xl-ribbon', XlRibbon);
customElements.define('xl-formula', XlFormula);
customElements.define('xl-sheet', XlSheet);
customElements.define('xl-tabs', XlTabs);
customElements.define('xl-status', XlStatus);
customElements.define('xl-taskbar', XlTaskbar);
customElements.define('xl-keytips', XlKeytips);
</script>
</body>
</html>
